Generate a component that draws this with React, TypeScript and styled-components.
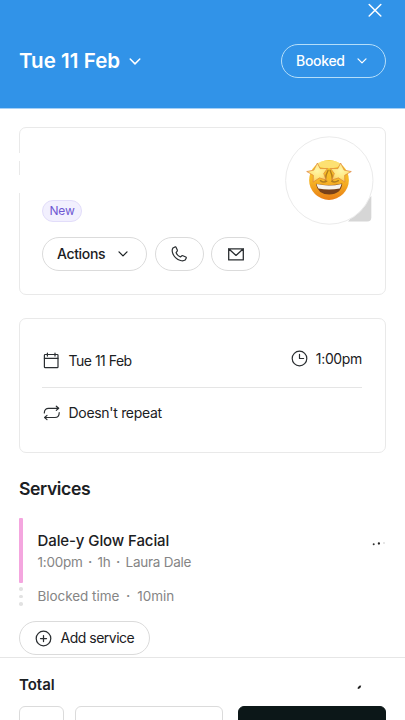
import React from "react";
import styled, { createGlobalStyle } from "styled-components";

const Global = createGlobalStyle`
  *, *::before, *::after { box-sizing: border-box; }
  html, body { margin: 0; padding: 0; background: #fff; overflow: hidden; }
  body { font-family: Inter, "Liberation Sans", sans-serif; color: #1b2023; }
  svg { display: block; flex: none; }
`;

const Screen = styled.div`
  width: 405px;
  height: 720px;
  overflow: hidden;
  display: flex;
  flex-direction: column;
  background: #fff;
`;

const Header = styled.header`
  height: 109px;
  flex: none;
  background: #3193e8;
  color: #fff;
  padding: 3px 19px 0;
  border-bottom: 1px solid #a5d0f6;
`;

const CloseRow = styled.div`
  display: flex;
  justify-content: flex-end;
  height: 41.4px;
  padding-right: 4px;
`;

const HeaderRow = styled.div`
  display: flex;
  align-items: center;
  justify-content: space-between;
`;

const Cluster = styled.div<{ $gap: number }>`
  display: flex;
  align-items: center;
  gap: ${(p) => p.$gap}px;
`;

const Label = styled.span<{
  $size: number;
  $track?: number;
  $weight?: number;
  $color?: string;
}>`
  font-size: ${(p) => p.$size}px;
  line-height: 20px;
  letter-spacing: ${(p) => p.$track ?? 0}px;
  font-weight: ${(p) => p.$weight ?? 400};
  color: ${(p) => p.$color ?? "inherit"};
  white-space: nowrap;
`;

const Pill = styled.button<{ $width: number; $onBlue?: boolean }>`
  display: flex;
  align-items: center;
  justify-content: space-between;
  width: ${(p) => p.$width}px;
  height: 34px;
  padding: 0 18px 0 14px;
  border: 1px solid ${(p) => (p.$onBlue ? "#b5def9" : "#dbdbdb")};
  border-radius: 17px;
  background: transparent;
  color: inherit;
  font-family: inherit;
`;

const IconPill = styled(Pill)`
  justify-content: center;
  padding: 0;
`;

const Content = styled.main`
  height: 548px;
  flex: none;
  padding: 18px 19px 0;
  display: flex;
  flex-direction: column;
`;

const Card = styled.section<{ $height: number }>`
  position: relative;
  height: ${(p) => p.$height}px;
  flex: none;
  border: 1px solid #e9e9e9;
  border-radius: 7px;
  padding: 0 23px 0 22px;
`;

const ClientCard = styled(Card)`
  display: flex;
  flex-direction: column;
  padding-top: 72px;
`;

const EdgeGap = styled.i<{ $top: number; $height: number }>`
  position: absolute;
  left: -1px;
  top: ${(p) => p.$top}px;
  width: 1px;
  height: ${(p) => p.$height}px;
  background: #fff;
`;

const Badge = styled.span`
  display: flex;
  align-items: center;
  justify-content: center;
  width: 40px;
  height: 22px;
  border: 1px solid #e2ddfa;
  border-radius: 11px;
  background: #f2f0fe;
  margin-bottom: 15.4px;
`;

const Avatar = styled.div`
  position: absolute;
  right: 10.5px;
  top: 7px;
  width: 92px;
  height: 92px;
`;

const BookingCard = styled(Card)`
  margin-top: 23px;
`;

const BookingRow = styled.div`
  display: flex;
  align-items: center;
  justify-content: space-between;
  height: 69px;
  padding-top: 15px;
  border-bottom: 1px solid #e5e5e5;
`;

const TimeCluster = styled(Cluster)`
  margin-top: -4px;
`;

const RepeatRow = styled.div`
  display: flex;
  align-items: center;
  height: 50px;
`;

const SectionTitle = styled.h2`
  margin: 25px 0 0;
  font-size: 17.6px;
  line-height: 22px;
  font-weight: 600;
  letter-spacing: -0.4px;
`;

const ServiceList = styled.div`
  display: flex;
  margin-top: 18px;
  height: 91px;
`;

const Timeline = styled.div`
  width: 4px;
  margin-right: 14.5px;
  display: flex;
  flex-direction: column;
  align-items: center;
  gap: 4px;
`;

const TimelineBar = styled.i`
  width: 4px;
  height: 65px;
  border-radius: 1px;
  background: #f4a6df;
`;

const TimelineDot = styled.i`
  width: 3.5px;
  height: 3.5px;
  border-radius: 50%;
  background: #e2e2e2;
`;

const ServiceText = styled.div`
  display: flex;
  flex-direction: column;
  padding-top: 13px;
  flex: 1;
`;

const ServiceMeta = styled(Label)<{ $before: number }>`
  display: flex;
  margin-top: ${(p) => p.$before}px;
  color: #858585;
`;

const Separator = styled.span<{ $width: number }>`
  width: ${(p) => p.$width}px;
  text-align: center;
  font-weight: 600;
`;

const MoreSlot = styled.div`
  padding: 20px 0 0;
`;

const AddPill = styled(Pill)`
  margin-top: 12px;
  flex: none;
  justify-content: flex-start;
  gap: 8.5px;
  padding-left: 15px;
`;

const Footer = styled.footer`
  height: 63px;
  border-top: 1px solid #e6e6e6;
  background: #fff;
  padding: 16px 19px 0;
`;

const TotalRow = styled.div`
  display: flex;
  justify-content: space-between;
  align-items: center;
  height: 22px;
  padding-right: 24px;
`;

const TotalMarkSlot = styled.span`
  padding-top: 4px;
`;

const FooterActions = styled.div`
  display: grid;
  grid-template-columns: 45px 148px 148px;
  column-gap: 11px;
  margin-top: 10px;
`;

const FooterButton = styled.button<{ $dark?: boolean }>`
  height: 34px;
  padding: 0;
  margin-left: ${(p) => (p.$dark ? 4 : 0)}px;
  width: ${(p) => (p.$dark ? "148px" : "auto")};
  border: 1px solid ${(p) => (p.$dark ? "#0c1718" : "#dbdbdb")};
  border-radius: 6px;
  background: ${(p) => (p.$dark ? "#0c1718" : "#fff")};
`;

const Chevron = ({ w = 10 }: { w?: number }) => (
  <svg width={w} height={w * 0.6} viewBox="0 0 10 6" fill="none" stroke="currentColor" strokeWidth="1.25" strokeLinecap="round" strokeLinejoin="round">
    <path d="M1 .9 5 4.9 9 .9" />
  </svg>
);

const CloseIcon = () => (
  <svg width="14" height="14" viewBox="0 0 14 14" stroke="currentColor" strokeWidth="1.5" strokeLinecap="round">
    <path d="M1.2 1.5 12.8 13M12.8 1.5 1.2 13" />
  </svg>
);

const line = {
  fill: "none",
  stroke: "#2a2e31",
  strokeWidth: 1.2,
  strokeLinecap: "round" as const,
  strokeLinejoin: "round" as const,
};

const PhoneIcon = () => (
  <svg width="18" height="18" viewBox="0 0 18 18" {...line}>
    <path d="M5 1.9 2.9 3.1C1.3 5.5 2.6 9.7 5.5 12.6c3 2.9 7.2 4.1 9.6 2.5l1.2-2.1c.1-.5-.1-.8-.5-1l-2.9-1.3c-.3-.1-.7-.1-1 .1l-1.5 1.1C8.6 11.2 6.9 9.5 6.1 7.7l1.1-1.6c.2-.3.2-.6.1-1L6 2.3c-.2-.4-.6-.6-1-.4Z" />
  </svg>
);

const MailIcon = () => (
  <svg width="16" height="13" viewBox="0 0 16 13" {...line} strokeWidth={1.3}>
    <path d="M.7.8h14.6v11.1H.7ZM.7.8 8 7.4 15.3.8" />
  </svg>
);

const CalendarIcon = () => (
  <svg width="17" height="17" viewBox="0 0 17 17" {...line}>
    <rect x="2.4" y="2.5" width="13.6" height="13.2" rx=".8" />
    <path d="M2.4 6.3H16M5.4 1v3.1M13 1v3.1" />
  </svg>
);

const RepeatIcon = () => (
  <svg width="18" height="16" viewBox="0 0 18 16" {...line}>
    <path d="M2.3 8c0-3.3 2-4.7 4.3-4.700h9.600M14.300 1.200l2.400 2.100-2.400 2.100M17.200 7.700c0 3.300-2 4.800-4.300 4.800H3.100M5 10.400l-2.400 2.100L5 14.600" />
  </svg>
);

const ClockIcon = () => (
  <svg width="17" height="17" viewBox="0 0 17 17" {...line}>
    <circle cx="8.5" cy="8.5" r="7.3" />
    <path d="M8.5 4.4v4.1h4.1" />
  </svg>
);

const PlusIcon = () => (
  <svg width="17" height="17" viewBox="0 0 17 17" {...line} strokeWidth={1.25}>
    <circle cx="8.5" cy="8.5" r="7.3" />
    <path d="M8.5 5.5v6M5.5 8.5h6" />
  </svg>
);

const MoreDots = () => (
  <svg width="14" height="12" viewBox="0 0 14 12">
    <circle cx="1.7" cy="6.3" r="1" fill="#333" />
    <circle cx="6.9" cy="5.5" r="1.15" fill="#222" />
    <circle cx="12" cy="5" r=".9" fill="#dcdcdc" />
  </svg>
);

const TotalMark = () => (
  <svg width="5" height="5" viewBox="0 0 5 5">
    <path d="M.3 3.2 2.2.8 4.2.5 3.6 2.5 1.8 3.900Z" fill="#202020" />
  </svg>
);

const StarFace = () => (
  <svg width="92" height="92" viewBox="0 0 92 92">
    <defs>
      <linearGradient id="face" x1="0" y1="0" x2="0" y2="1">
        <stop offset="0" stopColor="#f4c525" />
        <stop offset=".5" stopColor="#f7b827" />
        <stop offset="1" stopColor="#e87d14" />
      </linearGradient>
      <radialGradient id="star" cx=".5" cy=".4" r=".6">
        <stop offset="0" stopColor="#fff7a8" />
        <stop offset=".6" stopColor="#ffe680" />
        <stop offset="1" stopColor="#f8c75c" />
      </radialGradient>
      <path id="eye" d="m-.5-9.500 2.900 5.800 7.600-.2-4 5.200 2.500 6.700-6.800-2.200-6.600 4.400.300-7-6.900-3.900 7.400-1.500Z" />
    </defs>
    <path d="M88.300 61v21.500q0 4-4 4H65Z" fill="#d6d6d6" />
    <circle cx="46.300" cy="45.500" r="43.700" fill="#fff" stroke="#ebebeb" strokeWidth="1" />
    <g transform="translate(46 45) scale(.97) translate(-46.300 -45.300)">
      <circle cx="46.300" cy="45.300" r="20.500" fill="url(#face)" />
      <ellipse cx="46" cy="29.300" rx="12" ry="4" fill="#ffeb8c" opacity=".75" />
      <path d="M42.500 45.500q0-5 2.800-10M50 45.500q0-5-2.500-10M37.500 46q3 2.500 6.500.5M49 46.500q3 2 7-.5" fill="none" stroke="#b17c1e" strokeWidth="1.500" strokeLinecap="round" />
      <path d="M32.800 49.200q13.500 3 27.200-.2-1.300 11.200-13.500 11.300-12-.1-13.700-11.100Z" fill="#784119" />
      <path d="M33.500 49.500q13 3 25.700-.2-.5 2-1.800 4.700-11 2.200-22 0-1.500-2-1.900-4.500Z" fill="#f7f4ed" />
      <use href="#eye" x="34.800" y="37.300" fill="url(#star)" stroke="#dd843d" strokeWidth=".7" />
      <use href="#eye" fill="url(#star)" stroke="#dd843d" strokeWidth=".7" transform="translate(57.800 37.300) scale(-1 1)" />
    </g>
  </svg>
);

export default function App() {
  return (
    <>
      <Global />
      <Screen>
        <Header>
          <CloseRow><CloseIcon /></CloseRow>
          <HeaderRow>
            <Cluster $gap={9}>
              <Label $size={20.5} $weight={600} $track={0.05}>Tue 11 Feb</Label>
              <Chevron w={12} />
            </Cluster>
            <Pill $width={105} $onBlue>
              <Label $size={14} $weight={500} $track={-0.3}>Booked</Label>
              <Chevron />
            </Pill>
          </HeaderRow>
        </Header>
        <Content>
          <ClientCard $height={168}>
            <EdgeGap $top={25} $height={8} />
            <EdgeGap $top={47} $height={18} />
            <Avatar><StarFace /></Avatar>
            <Badge><Label $size={12} $color="#6f58d2" $track={-0.2}>New</Label></Badge>
            <Cluster $gap={7.5}>
              <Pill $width={105}>
                <Label $size={14} $weight={500} $track={-0.35}>Actions</Label>
                <Chevron />
              </Pill>
              <IconPill $width={49}><PhoneIcon /></IconPill>
              <IconPill $width={49}><MailIcon /></IconPill>
            </Cluster>
          </ClientCard>
          <BookingCard $height={135}>
            <BookingRow>
              <Cluster $gap={9.5}>
                <CalendarIcon />
                <Label $size={14} $track={-0.5}>Tue 11 Feb</Label>
              </Cluster>
              <TimeCluster $gap={8}>
                <ClockIcon />
                <Label $size={14} $track={-0.35}>1:00pm</Label>
              </TimeCluster>
            </BookingRow>
            <RepeatRow>
              <Cluster $gap={8.5}>
                <RepeatIcon />
                <Label $size={14} $track={-0.3}>Doesn't repeat</Label>
              </Cluster>
            </RepeatRow>
          </BookingCard>
          <SectionTitle>Services</SectionTitle>
          <ServiceList>
            <Timeline>
              <TimelineBar />
              <TimelineDot />
              <TimelineDot />
              <TimelineDot />
            </Timeline>
            <ServiceText>
              <Label $size={15} $weight={500} $track={-0.1}>Dale-y Glow Facial</Label>
              <ServiceMeta $size={13.5} $before={1} $track={-0.25}>
                1:00pm<Separator $width={15}>·</Separator>1h<Separator $width={15}>·</Separator>Laura Dale
              </ServiceMeta>
              <ServiceMeta $size={13.5} $before={14} $track={-0.05}>
                Blocked time<Separator $width={18}>·</Separator>10min
              </ServiceMeta>
            </ServiceText>
            <MoreSlot><MoreDots /></MoreSlot>
          </ServiceList>
          <AddPill $width={131}>
            <PlusIcon />
            <Label $size={14} $track={-0.5}>Add service</Label>
          </AddPill>
        </Content>
        <Footer>
          <TotalRow>
            <Label $size={15} $weight={600}>Total</Label>
            <TotalMarkSlot><TotalMark /></TotalMarkSlot>
          </TotalRow>
          <FooterActions>
            <FooterButton aria-label="More options" />
            <FooterButton aria-label="Secondary action" />
            <FooterButton aria-label="Primary action" $dark />
          </FooterActions>
        </Footer>
      </Screen>
    </>
  );
}
